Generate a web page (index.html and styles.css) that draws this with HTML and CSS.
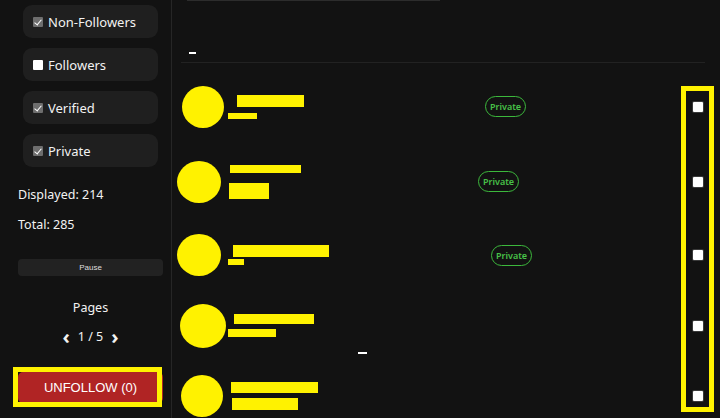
FILE: index.html
```html
<!DOCTYPE html>
<html lang="en">
<head>
  <meta charset="UTF-8">
  <title>Unfollow Manager</title>
  <link rel="stylesheet" href="styles.css">
</head>
<body>
  <aside class="sidebar">
    <div class="filters">
      <label class="filter"><span class="box checked"></span>Non-Followers</label>
      <label class="filter"><span class="box"></span>Followers</label>
      <label class="filter"><span class="box checked"></span>Verified</label>
      <label class="filter"><span class="box checked"></span>Private</label>
    </div>
    <div class="stats">
      <p>Displayed: 214</p>
      <p>Total: 285</p>
    </div>
    <button class="pause">Pause</button>
    <div class="pages">
      <p class="pages-title">Pages</p>
      <div class="pager">
        <span class="chev">&#8249;</span>
        <span>1 / 5</span>
        <span class="chev">&#8250;</span>
      </div>
    </div>
    <div class="unfollow-wrap">
      <button class="unfollow">UNFOLLOW (0)</button>
      <div class="mark mark-unfollow"></div>
    </div>
  </aside>

  <main class="results">
    <div class="search-edge"></div>
    <div class="list-head"><span class="dash"></span></div>

    <ul class="users">
      <li class="user">
        <div class="avatar"></div>
        <div class="info">
          <div class="redact name"></div>
          <div class="redact handle"></div>
        </div>
        <span class="badge">Private</span>
        <span class="pick"></span>
      </li>
      <li class="user">
        <div class="avatar"></div>
        <div class="info">
          <div class="redact name"></div>
          <div class="redact handle"></div>
        </div>
        <span class="badge">Private</span>
        <span class="pick"></span>
      </li>
      <li class="user">
        <div class="avatar"></div>
        <div class="info">
          <div class="redact name"></div>
          <div class="redact handle"></div>
        </div>
        <span class="badge">Private</span>
        <span class="pick"></span>
      </li>
      <li class="user">
        <div class="avatar"></div>
        <div class="info">
          <div class="redact name"></div>
          <div class="redact handle"></div>
        </div>
        <span class="stray"></span>
        <span class="pick"></span>
      </li>
      <li class="user">
        <div class="avatar"></div>
        <div class="info">
          <div class="redact name"></div>
          <div class="redact handle"></div>
        </div>
        <span class="pick"></span>
      </li>
    </ul>

    <div class="mark mark-picks"></div>
  </main>
</body>
</html>
```

FILE: styles.css
```css
* {
  box-sizing: border-box;
}
body {
  margin: 0;
  height: 418px;
  overflow: hidden;
  display: flex;
  background: #121212;
  color: #f2f2f2;
  font-family: "Noto Sans", "Open Sans", sans-serif;
  font-size: 12.5px;
}
p {
  margin: 0;
}

/* sidebar */
.sidebar {
  width: 172px;
  flex-shrink: 0;
  padding: 5px 8px 0 18px;
  border-right: 1px solid #262626;
  display: flex;
  flex-direction: column;
}
.filters {
  display: flex;
  flex-direction: column;
  gap: 10px;
  margin: 0 5px;
}
.filter {
  height: 33px;
  display: flex;
  align-items: center;
  gap: 5px;
  padding-left: 10px;
  background: #1f1f1f;
  border-radius: 9px;
  font-size: 13px;
}
.box {
  width: 10px;
  height: 10px;
  background: #fff;
  border-radius: 1px;
  position: relative;
}
.box.checked {
  background: #6e6e6e;
}
.box.checked::after {
  content: "";
  position: absolute;
  left: 3px;
  top: 1px;
  width: 3px;
  height: 6px;
  border: solid #fff;
  border-width: 0 1.5px 1.5px 0;
  transform: rotate(40deg);
}
.stats {
  margin-top: 13px;
}
.stats p {
  line-height: 30px;
}
.pause {
  margin-top: 19px;
  height: 17px;
  width: 145px;
  border: none;
  border-radius: 4px;
  background: #222;
  color: #ddd;
  font-family: "Liberation Sans", Arial, sans-serif;
  font-size: 8px;
  padding: 0;
}
.pages {
  margin-top: 22px;
  text-align: center;
}
.pages-title {
  line-height: 20px;
}
.pager {
  margin-top: 9px;
  display: flex;
  justify-content: center;
  align-items: center;
  gap: 8px;
  line-height: 20px;
}
.chev {
  font-size: 20px;
  font-weight: bold;
  line-height: 16px;
}
.unfollow-wrap {
  position: relative;
  margin-top: 25px;
}
.unfollow {
  display: block;
  width: 145px;
  height: 31px;
  border: none;
  border-radius: 5px;
  background: #b02424;
  color: #fff;
  font-family: "Liberation Sans", Arial, sans-serif;
  font-size: 13px;
  padding: 0;
}

/* annotation boxes */
.mark {
  position: absolute;
  border: 5px solid #fff200;
}
.mark-unfollow {
  left: -5px;
  top: -5px;
  width: 149px;
  height: 40px;
}
.mark-picks {
  left: 509px;
  top: 86px;
  width: 33px;
  height: 326px;
}

/* results */
.results {
  flex: 1;
  position: relative;
  padding: 0 15px 0 9px;
}
.search-edge {
  width: 253px;
  height: 1px;
  margin-left: 6px;
  background: #2c2c2c;
}
.list-head {
  height: 62px;
  border-bottom: 1px solid #222;
  position: relative;
}
.dash {
  position: absolute;
  left: 8px;
  top: 51px;
  width: 7px;
  height: 1.5px;
  background: #fff;
}
.users {
  list-style: none;
  margin: 0;
  padding: 6px 0 0;
}
.user {
  display: flex;
  align-items: center;
  height: 72px;
  padding-right: 2px;
  position: relative;
}
.user:nth-child(1), .user:nth-child(2) {
  height: 75px;
}
.user:nth-child(4) {
  height: 69px;
}
.avatar {
  width: 42px;
  height: 42px;
  border-radius: 50%;
  background: #fff200;
  flex-shrink: 0;
}
.user:nth-child(1) .avatar {
  margin-left: 1px;
}
.user:nth-child(2) .avatar,
.user:nth-child(3) .avatar {
  width: 44px;
  margin-left: -4px;
}
.user:nth-child(4) .avatar {
  width: 46px;
  height: 44px;
  margin-left: -1px;
}
.info {
  width: 250px;
  margin-left: 4px;
  display: flex;
  flex-direction: column;
}
.redact {
  background: #fff200;
}
.name {
  height: 12px;
}
.handle {
  margin-top: 6px;
  height: 6px;
}
.user:nth-child(1) .name { width: 67px; margin-left: 9px; }
.user:nth-child(1) .handle { width: 29px; }
.user:nth-child(2) .name { width: 71px; height: 8px; margin-left: 5px; }
.user:nth-child(2) .handle { width: 40px; height: 16px; margin-top: 10px; margin-left: 4px; }
.user:nth-child(3) .name { width: 96px; margin-left: 8px; }
.user:nth-child(3) .handle { width: 16px; margin-top: 2px; margin-left: 3px; }
.user:nth-child(4) .name { width: 80px; height: 10px; margin-left: 4px; }
.user:nth-child(4) .handle { width: 48px; height: 8px; margin-top: 5px; margin-left: -2px; }
.user:nth-child(5) .name { width: 87px; height: 11px; margin-left: 4px; }
.user:nth-child(5) .handle { width: 66px; height: 12px; margin-top: 5px; margin-left: 5px; }

.badge {
  height: 21px;
  padding: 0 4px;
  display: flex;
  align-items: center;
  border: 1.5px solid #3cb83c;
  border-radius: 11px;
  color: #48c248;
  font-size: 9px;
  font-weight: 600;
  margin-left: 7px;
}
.user:nth-child(2) .badge {
  margin-left: 3px;
}
.user:nth-child(3) .badge {
  margin-left: 16px;
}
.stray {
  position: absolute;
  left: 177px;
  top: 61px;
  width: 9px;
  height: 2px;
  background: #fff;
}
.pick {
  margin-left: auto;
  width: 10px;
  height: 10px;
  background: #fff;
  border-radius: 1px;
  box-shadow: 0 0 0 1px #3a3a3a;
}
```
